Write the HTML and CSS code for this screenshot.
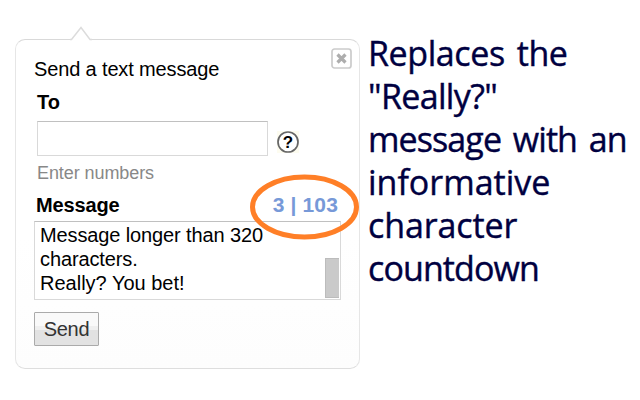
FILE: index.html
```html
<!DOCTYPE html>
<html lang="en">
<head>
<meta charset="utf-8">
<title>Send a text message</title>
<link rel="stylesheet" href="styles.css">
</head>
<body>
<main class="page">
  <section class="card">
    <svg class="pointer" width="22" height="15" viewBox="0 0 22 15"><path d="M1 13.500L11 1.500L20.500 13.500V15H1Z" fill="#fff"/><path d="M0 13.500H1.500L11 1.500L20 13.500H22" fill="none" stroke="#dcdcdc" stroke-width="1.500"/></svg>
    <svg class="close" width="21" height="21" viewBox="0 0 21 21"><rect x="1" y="1" width="19" height="19" rx="2.500" fill="#fff" stroke="#cbcbcb" stroke-width="1.700"/><path d="M6.500 6.500L14.500 14.500M14.500 6.500L6.500 14.500" stroke="#adadad" stroke-width="3.200"/></svg>
    <div class="title"><span>Send a text message</span></div>
    <div class="label to"><span>To</span></div>
    <div class="row">
      <div class="input"></div>
      <svg class="help" width="22" height="22" viewBox="0 0 22 22"><rect width="22" height="22" fill="#fdfcf0"/><circle cx="11" cy="11" r="10" fill="#fff" stroke="#666" stroke-width="1.700"/><text class="mark" x="11" y="16.500" text-anchor="middle">?</text></svg>
    </div>
    <div class="hint"><span>Enter numbers</span></div>
    <div class="label message"><span class="name">Message</span><span class="count">3 | 103</span></div>
    <div class="textarea">
      <div class="l1">Message longer than 320</div>
      <div class="l2">characters.</div>
      <div class="l3">Really? You bet!</div>
      <div class="thumb"></div>
    </div>
    <div class="button"><span>Send</span></div>
    <svg class="ring" width="110" height="66" viewBox="0 0 110 66"><ellipse cx="54.500" cy="33" rx="52" ry="30" fill="none" stroke="#ff7f27" stroke-width="5"/></svg>
  </section>
  <div class="headline">
    <div class="h1">Replaces the</div>
    <div class="h2">"Really?"</div>
    <div class="h3">message with an</div>
    <div class="h4">informative</div>
    <div class="h5">character</div>
    <div class="h6">countdown</div>
  </div>
</main>
</body>
</html>
```
FILE: styles.css
```css
* { box-sizing: border-box; }
body { margin: 0; background: #fff; }
.page {
  display: flex;
  width: 640px;
  height: 400px;
  padding: 39px 0 0 15px;
  overflow: hidden;
  font: 20px/24px "Liberation Sans", Arial, sans-serif;
  color: #000;
  white-space: nowrap;
}
.card {
  position: relative;
  flex: none;
  width: 345px;
  height: 330px;
  padding: 17px 18px 0;
  border: 1px solid #e6e6e6;
  border-top-color: #d9d9d9;
  border-bottom-color: #dedede;
  border-radius: 10px;
  background: linear-gradient(#fff 60%, #fdfdfd);
}
.pointer { position: absolute; left: 54px; top: -14px; }
.close { position: absolute; left: 315px; top: 8px; }
.title { letter-spacing: -0.14px; }
.label { font-weight: bold; }
.to { margin: 9px 0 0 3px; }
.row { display: flex; align-items: flex-start; margin: 7px 0 0 3px; }
.input { width: 231px; height: 35px; border: 1px solid #d9d9d9; border-top-color: #c0c0c0; background: #fff; }
.help { margin: 10px 0 0 9px; }
.mark { font: bold 17px "Liberation Sans", Arial, sans-serif; }
.hint { margin: 5px 0 0 3px; color: #888; font-size: 18px; letter-spacing: -0.08px; }
.message { display: flex; justify-content: space-between; margin: 8px 3px 0 2px; height: 28px; }
.name { letter-spacing: -0.15px; }
.count { color: #7799d8; font-size: 21px; letter-spacing: 0.15px; }
.textarea {
  position: relative;
  width: 307px;
  height: 79px;
  padding: 1px 0 0 5px;
  border: 1px solid #d9d9d9;
  border-top-color: #c0c0c0;
  background: #fff;
}
.l1, .l2 { letter-spacing: -0.12px; }
.thumb { position: absolute; right: 1px; bottom: 1px; width: 14px; height: 40px; background: #cacaca; border: 1px solid #bcbcbc; border-right: 0; }
.button {
  width: 65px;
  height: 34px;
  margin-top: 12px;
  border: 1px solid #aaa;
  border-radius: 1px;
  background: linear-gradient(#f9f9f9 0 40%, #efefef 40% 53%, #e2e2e2 53%);
  color: #333;
  line-height: 32px;
  letter-spacing: -0.3px;
  text-align: center;
}
.ring { position: absolute; left: 234px; top: 134px; }
.headline {
  margin: -7px 0 0 8px;
  font: 34px/43px "Open Sans", sans-serif;
  color: #000040;
  -webkit-text-stroke: 0.4px #000040;
}
.h1 { letter-spacing: -0.4px; word-spacing: 3.500px; }
.h2 { letter-spacing: -0.65px; }
.h3 { letter-spacing: -0.9px; word-spacing: 3.700px; }
.h4 { letter-spacing: 0; }
.h5 { letter-spacing: -0.1px; }
.h6 { letter-spacing: -0.9px; }
```
